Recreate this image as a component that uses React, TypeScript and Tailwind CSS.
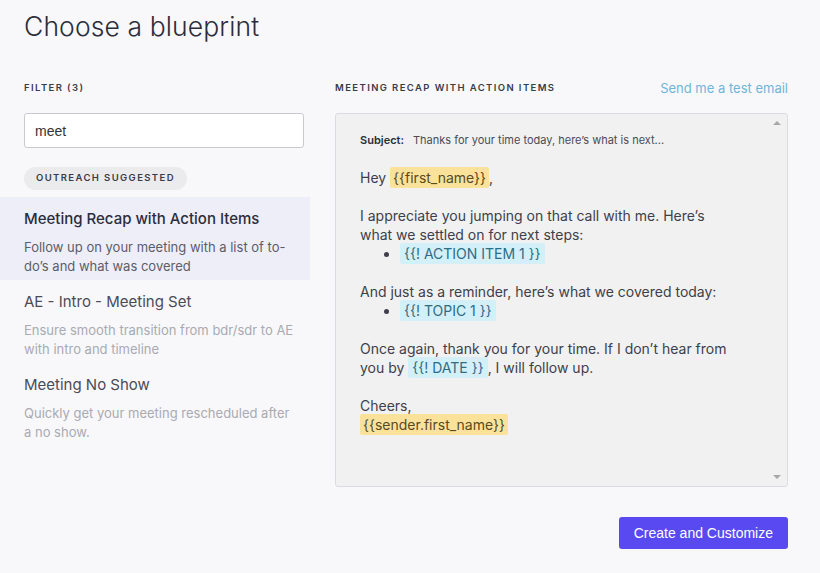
import React from "react";

const BLUEPRINTS = [
  {
    title: "Meeting Recap with Action Items",
    desc: "Follow up on your meeting with a list of to-do’s and what was covered",
    active: true,
  },
  {
    title: "AE - Intro - Meeting Set",
    desc: "Ensure smooth transition from bdr/sdr to AE with intro and timeline",
    active: false,
  },
  {
    title: "Meeting No Show",
    desc: "Quickly get your meeting rescheduled after a no show.",
    active: false,
  },
];

function Var({ children }: { children: React.ReactNode }) {
  return (
    <span className="bg-[#fbe29b] text-[#5a4a1e] rounded-[2px] px-[3px] py-[2px]">
      {children}
    </span>
  );
}

function Snippet({ children }: { children: React.ReactNode }) {
  return (
    <span className="bg-[#d3f0f9] text-[#2f6c86] rounded-[2px] px-[4px] py-[2px]">
      {children}
    </span>
  );
}

export default function App() {
  return (
    <div className="min-h-[573px] w-[820px] bg-[#f8f8fa] font-['Inter',sans-serif] text-[#2e3040]">
      <h1 className="pl-6 pt-[10px] text-[26.5px] font-light leading-[32px] tracking-[0.1px] text-[#2b2d3b]">
        Choose a blueprint
      </h1>

      <div className="flex pt-[39px]">
        {/* left column */}
        <div className="w-[310px] shrink-0">
          <div className="px-6">
            <p className="text-[9.5px] font-semibold tracking-[1.4px] leading-[14px] text-[#3a3b48]">
              FILTER (3)
            </p>
            <input
              defaultValue="meet"
              className="mt-[18px] h-[35px] w-[280px] rounded-[3px] border border-[#c9c9cf] bg-white px-[10px] font-['Liberation_Sans',sans-serif] text-[14px] text-[#333] outline-none"
            />
            <span className="mt-[19px] inline-flex h-[23px] items-center rounded-full bg-[#ebebee] px-3 text-[9.5px] font-semibold tracking-[1.4px] text-[#3a3b48]">
              OUTREACH SUGGESTED
            </span>
          </div>

          <div className="mt-[7px]">
            {BLUEPRINTS.map((b) => (
              <div
                key={b.title}
                className={`pl-6 pr-[10px] pt-[11px] pb-[4px] ${b.active ? "bg-[#eeeef9]" : ""}`}
              >
                <p
                  className={`text-[15px] leading-[22px] ${
                    b.active ? "font-medium text-[#2b2d3b]" : "text-[#4a4b57]"
                  }`}
                >
                  {b.title}
                </p>
                <p
                  className={`mt-[8px] text-[13px] leading-[19px] ${
                    b.active ? "text-[#5c5d68]" : "text-[#a9aab2]"
                  }`}
                >
                  {b.desc}
                </p>
              </div>
            ))}
          </div>
        </div>

        {/* right column */}
        <div className="ml-[25px] w-[453px]">
          <div className="flex items-center justify-between">
            <p className="text-[9.5px] font-semibold tracking-[1.4px] leading-[14px] text-[#3a3b48]">
              MEETING RECAP WITH ACTION ITEMS
            </p>
            <a className="text-[13px] leading-[14px] text-[#6fb5d8]">
              Send me a test email
            </a>
          </div>

          <div className="relative mt-[18px] h-[374px] rounded-[3px] border border-[#dcdce0] bg-[#f1f1f2]">
            {/* scrollbar arrows */}
            <span className="absolute right-[6px] top-[7px] h-0 w-0 border-x-[4px] border-b-[4px] border-x-transparent border-b-[#a8a8a8]" />
            <span className="absolute right-[6px] bottom-[7px] h-0 w-0 border-x-[4px] border-t-[4px] border-x-transparent border-t-[#a8a8a8]" />

            <div className="px-6 pt-[17px] text-[14px] leading-[19px] text-[#3e3f4a]">
              <p className="text-[11px] leading-[18px]">
                <span className="font-semibold text-[#2b2d3b]">Subject:</span>
                <span className="ml-[9px] text-[#4a4b57]">
                  Thanks for your time today, here’s what is next...
                </span>
              </p>

              <p className="mt-[19px]">
                Hey <Var>{"{{first_name}}"}</Var>,
              </p>

              <p className="mt-[19px]">
                I appreciate you jumping on that call with me. Here’s
                <br />
                what we settled on for next steps:
              </p>
              <ul className="list-disc pl-[40px]">
                <li>
                  <Snippet>{"{{! ACTION ITEM 1 }}"}</Snippet>
                </li>
              </ul>

              <p className="mt-[19px]">
                And just as a reminder, here’s what we covered today:
              </p>
              <ul className="list-disc pl-[40px]">
                <li>
                  <Snippet>{"{{! TOPIC 1 }}"}</Snippet>
                </li>
              </ul>

              <p className="mt-[19px]">
                Once again, thank you for your time. If I don’t hear from
                <br />
                you by <Snippet>{"{{! DATE }}"}</Snippet>, I will follow up.
              </p>

              <p className="mt-[19px]">
                Cheers,
                <br />
                <Var>{"{{sender.first_name}}"}</Var>
              </p>
            </div>
          </div>

          <div className="mt-[30px] flex justify-end">
            <button className="h-[32px] rounded-[3px] bg-[#5849f0] px-[15px] font-['Liberation_Sans',sans-serif] text-[14px] text-white">
              Create and Customize
            </button>
          </div>
        </div>
      </div>
    </div>
  );
}
